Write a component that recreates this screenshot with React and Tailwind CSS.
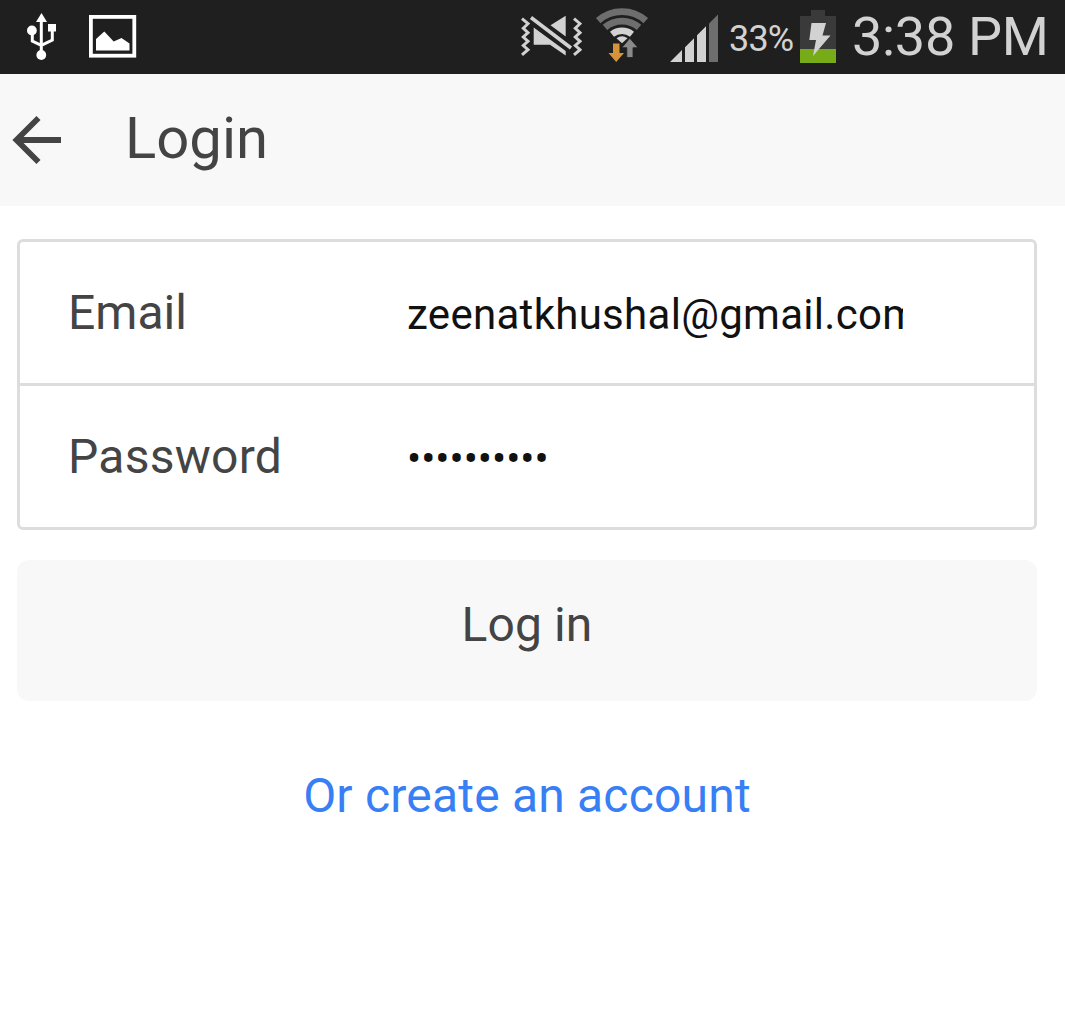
const UsbIcon = () => (
  <svg className="ml-[26px] h-[50px] w-[32px] shrink-0" viewBox="26 12 32 50" fill="none">
    <g fill="#fff">
      <path d="M41.5 13L47 22H36z" />
      <circle cx="31.9" cy="30.5" r="4.9" />
      <rect x="48" y="24" width="8" height="7.5" />
      <circle cx="41.3" cy="55" r="4.9" />
    </g>
    <path d="M41.3 20V52M32.3 33V41L41.3 45.3M52.3 31V40L41.3 45.3" stroke="#fff" strokeWidth="3" />
  </svg>
);

const PictureIcon = () => (
  <svg className="ml-[31px] h-[44px] w-[48px] shrink-0" viewBox="89 15 48 44">
    <rect x="90.9" y="16.9" width="43.4" height="38.8" fill="none" stroke="#fff" strokeWidth="3.8" />
    <path d="M96 50.5V39L104.3 31.5L113.7 41.5L121.5 38L129.5 43.5V50.5z" fill="#fff" />
  </svg>
);

const MutedVibrateIcon = () => (
  <svg className="h-[44px] w-[62px] shrink-0" viewBox="520 15 62 44">
    <g fill="#d2d2d2">
      <path d="M533.7 27.5L565.7 51V55.5L550 44.8H533.7z" />
      <path d="M565.7 15.7V36.5L550.5 25.3z" />
    </g>
    <g fill="none" stroke="#d2d2d2" strokeWidth="3">
      <path d="M522 18.7L528 23.7L523.3 28.3L528 32.7L523.3 37L528 41.3L523.3 45.5L528 49.7L522 54.9" />
      <path d="M574 18.7L580 23.7L575.3 28.3L580 32.7L575.3 37L580 41.3L575.3 45.5L580 49.7L574 54.9" />
    </g>
    <path d="M531 17.5L571 48" stroke="#d2d2d2" strokeWidth="3.6" />
  </svg>
);

const WifiIcon = () => (
  <svg className="ml-[14px] h-[56px] w-[54px] shrink-0" viewBox="596 9 54 56" overflow="visible">
    <g fill="none" stroke="#6e6e6e">
      <path d="M598.2 20.6A36 36 0 0 1 645.8 20.6" strokeWidth="6.8" />
      <path d="M605 27.4A26 26 0 0 1 639 27.4" strokeWidth="6.8" />
    </g>
    <path d="M612 34.2A16 16 0 0 1 632 34.2" fill="none" stroke="#d2d2d2" strokeWidth="6.4" />
    <path d="M616.5 38.3Q622 34.2 627.5 38.3L622 43.3z" fill="#d2d2d2" />
    <path d="M629.8 38.3L638 47.7H633V57.5H626.8V47.7H621.8z" fill="#8a8a8a" stroke="#1f1f1f" strokeWidth="0.8" />
    <path d="M613 43.5H619.5V53H624L616.2 62L608.5 53H613z" fill="#d69439" />
  </svg>
);

const SignalIcon = () => (
  <svg className="ml-[20px] h-[48px] w-[48px] shrink-0" viewBox="670 13 48 48" overflow="visible">
    <path d="M670 62L682 50V62zM685 47.3L694 38.3V62H685zM697 35.3L706 26.3V62H697z" fill="#d2d2d2" />
    <path d="M709 23.5L718 14.5V62H709z" fill="#6e6e6e" />
  </svg>
);

const BatteryIcon = () => (
  <svg className="h-[54px] w-[36px] shrink-0" viewBox="800 10 36 54">
    <path d="M800 16H811V10H825V16H836V63H800z" fill="#3a3a3a" />
    <path d="M800 49H836V63H800z" fill="#77ab17" />
    <path d="M811.5 23H826L822.5 35.5H830.5L813 56L816 40H809.3z" fill="#d2d2d2" />
  </svg>
);

const StatusBar = () => (
  <div className="flex h-[74px] items-center bg-[#1f1f1f] text-[#d2d2d2]">
    <UsbIcon />
    <PictureIcon />
    <div className="ml-auto flex items-center">
      <MutedVibrateIcon />
      <WifiIcon />
      <SignalIcon />
      <span className="ml-[11px] w-[71px] pt-[3px] text-[36px] leading-none tracking-[-0.8px] whitespace-nowrap">33%</span>
      <BatteryIcon />
      <span className="ml-[16px] w-[213px] text-[54px] leading-none tracking-[-0.3px] whitespace-nowrap">3:38 PM</span>
    </div>
  </div>
);

const Header = () => (
  <header className="flex h-[132px] items-center bg-[#f8f8f8]">
    <svg className="ml-[12px] h-[50px] w-[50px]" viewBox="12 115 50 50" fill="none" stroke="#444" strokeWidth="5.8">
      <path d="M61 140H17M38.5 118L16.5 140L38.5 162" />
    </svg>
    <h1 className="ml-[63px] pb-[5px] text-[58px] leading-none">Login</h1>
  </header>
);

const Field = ({ label, children }) => (
  <div className="flex h-[141px] items-center">
    <span className="ml-[48px] w-[339px] shrink-0 pt-px text-[48px] leading-none">{label}</span>
    <div className="w-[496px] overflow-hidden pt-[5px] text-[42px] leading-[56px] whitespace-nowrap text-[#111]">
      {children}
    </div>
  </div>
);

export default function App() {
  return (
    <div className="min-h-[1033px] bg-white font-['Roboto',sans-serif] text-[#444]">
      <StatusBar />
      <Header />
      <main className="ml-[17px] w-[1020px] pt-[33px]">
        <div className="rounded-[6px] border-3 border-[#ddd]">
          <Field label="Email">
            <span className="tracking-[0.3px]">zeenatkhushal@gmail.com</span>
          </Field>
          <hr className="border-t-3 border-[#ddd]" />
          <Field label={<span className="tracking-[0.25px]">Password</span>}>••••••••••</Field>
        </div>
        <button className="mt-[30px] block h-[141px] w-full rounded-[12px] bg-[#f8f8f8] pb-[12px] text-[48px] leading-none tracking-[0.1px]">
          Log in
        </button>
        <a className="mt-[71px] block text-center text-[48px] leading-none tracking-[0.2px] text-[#387ef5]">
          Or create an account
        </a>
      </main>
    </div>
  );
}
